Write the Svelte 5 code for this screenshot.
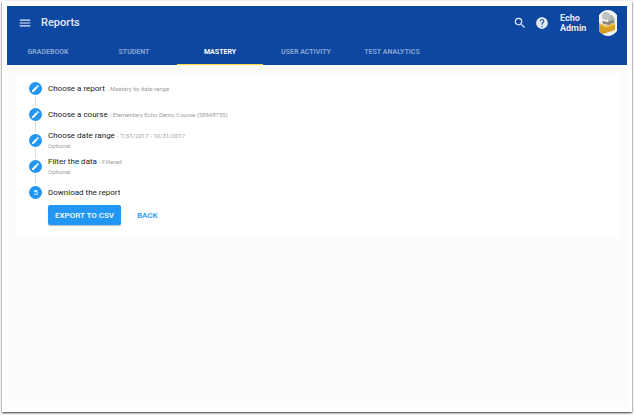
<script>
  const tabs = ['Gradebook', 'Student', 'Mastery', 'User activity', 'Test analytics'];
  let active = $state('Mastery');

  const steps = [
    { title: 'Choose a report', detail: 'Mastery by date range' },
    { title: 'Choose a course', detail: 'Elementary Echo Demo Course (58848755)' },
    { title: 'Choose date range', detail: '7/31/2017 - 10/31/2017', optional: true },
    { title: 'Filter the data', detail: 'Filtered', optional: true },
    { title: 'Download the report', current: true }
  ];
</script>

<div class="window">
  <div class="app">
    <header>
      <div class="toolbar">
        <button class="icon" aria-label="Menu">
          <svg viewBox="0 0 24 24" width="14" height="14"><path d="M3 18h18v-2H3v2zm0-5h18v-2H3v2zm0-7v2h18V6H3z" /></svg>
        </button>
        <h1>Reports</h1>
        <button class="icon" aria-label="Search">
          <svg viewBox="0 0 24 24" width="14" height="14"><path d="M15.5 14h-.79l-.28-.27A6.47 6.47 0 0 0 16 9.5 6.5 6.5 0 1 0 9.5 16c1.61 0 3.09-.59 4.23-1.57l.27.28v.79l5 4.99L20.49 19l-4.99-5zm-6 0C7.01 14 5 11.99 5 9.5S7.01 5 9.5 5 14 7.01 14 9.5 11.99 14 9.5 14z" /></svg>
        </button>
        <button class="icon help" aria-label="Help">
          <svg viewBox="0 0 24 24" width="14" height="14"><path d="M12 2C6.48 2 2 6.48 2 12s4.48 10 10 10 10-4.48 10-10S17.52 2 12 2zm1 17h-2v-2h2v2zm2.07-7.75l-.9.92C13.45 12.9 13 13.5 13 15h-2v-.5c0-1.1.45-2.1 1.17-2.83l1.24-1.26c.37-.36.59-.86.59-1.41 0-1.1-.9-2-2-2s-2 .9-2 2H8c0-2.21 1.79-4 4-4s4 1.79 4 4c0 .88-.36 1.68-.93 2.25z" /></svg>
        </button>
        <div class="user">Echo<br />Admin</div>
        <svg class="avatar" viewBox="0 0 18 26" width="18" height="26">
          <defs>
            <clipPath id="face"><path d="M0 5Q4 0 9 0t9 5v16q-4 5-9 5t-9-5z" /></clipPath>
          </defs>
          <g clip-path="url(#face)">
            <rect width="18" height="26" fill="#f4f4f2" />
            <path d="M9 5l4 0 3 4-1 4-6-1z" fill="#b4b7b8" />
            <circle cx="7" cy="6" r="4" fill="#c0c3c5" />
            <path d="M3 11l6 1 5-2 2 2-6 3-6-1z" fill="#8a8878" />
            <path d="M0 13l7 3 9-3v7L4 24l-4-2z" fill="#d3a11f" />
            <path d="M0 13l7 3 9-3v2L7 18l-7-3z" fill="#e6bd4b" />
          </g>
        </svg>
      </div>
      <nav>
        {#each tabs as tab}
          <button class="tab" class:active={active === tab} onclick={() => (active = tab)}>{tab}</button>
        {/each}
      </nav>
    </header>

    <main>
      <ol>
        {#each steps as step, i}
          <li>
            <span class="badge">
              {#if step.current}
                {i + 1}
              {:else}
                <svg viewBox="0 0 24 24" width="9" height="9"><path d="M3 17.25V21h3.75L17.81 9.94l-3.75-3.75L3 17.25zM20.71 7.04a1 1 0 0 0 0-1.41l-2.34-2.34a1 1 0 0 0-1.41 0l-1.83 1.83 3.75 3.75 1.83-1.83z" /></svg>
              {/if}
            </span>
            <div class="text">
              <div class="title">
                {step.title}
                {#if step.detail}<small>- {step.detail}</small>{/if}
              </div>
              {#if step.optional}<div class="optional">Optional</div>{/if}
            </div>
          </li>
        {/each}
      </ol>
      <div class="actions">
        <button class="btn primary">Export to CSV</button>
        <button class="btn">Back</button>
      </div>
    </main>
  </div>
</div>

<style>
  :global(body) {
    background: #fff;
  }
  .window {
    box-sizing: border-box;
    min-height: 100vh;
    padding: 1px 2px 3px;
    display: flex;
    font-family: Roboto, sans-serif;
  }
  .app {
    flex: 1;
    box-sizing: border-box;
    border: 5px solid #fff;
    background: #fcfcfc;
    box-shadow: 0 1px 2px rgba(0, 0, 0, 0.8);
  }
  button {
    border: 0;
    padding: 0;
    background: none;
    color: inherit;
    font-family: inherit;
    cursor: pointer;
  }
  header {
    background: #0d47a1;
    color: #e3ebf7;
  }
  .toolbar {
    display: flex;
    align-items: center;
    height: 33px;
    padding: 0 10px 0 11px;
  }
  .icon {
    display: flex;
  }
  svg {
    fill: currentColor;
  }
  h1 {
    flex: 1;
    margin: 0 0 0 9px;
    font-size: 11px;
    font-weight: 500;
  }
  .help {
    margin-left: 8px;
  }
  .user {
    width: 39px;
    margin-left: 11px;
    font-size: 9px;
    line-height: 10px;
    font-weight: 700;
  }
  nav {
    display: flex;
    margin-left: -2px;
  }
  .tab {
    width: 86px;
    height: 26px;
    border-bottom: 1px solid transparent;
    color: #86a3d0;
    font-size: 7px;
    font-weight: 700;
    text-transform: uppercase;
  }
  .tab.active {
    border-color: #ffd740;
    color: #fff;
  }
  main {
    margin: 10px 8px 0 9px;
    padding: 0 13px 12px;
    background: #fff;
  }
  ol {
    list-style: none;
    margin: 0;
    padding: 0;
  }
  li {
    position: relative;
    display: flex;
    align-items: center;
    gap: 6px;
    height: 26px;
  }
  li:not(:last-child)::after {
    content: '';
    position: absolute;
    left: 6px;
    top: 21px;
    height: 10px;
    border-left: 1px solid #dcdcdc;
  }
  .badge {
    display: flex;
    align-items: center;
    justify-content: center;
    width: 13px;
    height: 13px;
    border-radius: 50%;
    background: #2196f3;
    color: #fff;
    font-size: 8px;
  }
  .text {
    padding-top: 2px;
  }
  .title {
    color: #222;
    font-size: 8px;
    line-height: 10px;
  }
  small,
  .optional {
    color: #9e9e9e;
    font-size: 6px;
    line-height: 10px;
  }
  .actions {
    display: flex;
    margin-left: 19px;
  }
  .btn {
    height: 20px;
    padding: 0 7px;
    border-radius: 2px;
    color: #2196f3;
    font-size: 8px;
    font-weight: 500;
    text-transform: uppercase;
  }
  .primary {
    margin-right: 9px;
    background: #2196f3;
    color: #fff;
    box-shadow: 0 1px 1px rgba(0, 0, 0, 0.25);
  }
</style>
